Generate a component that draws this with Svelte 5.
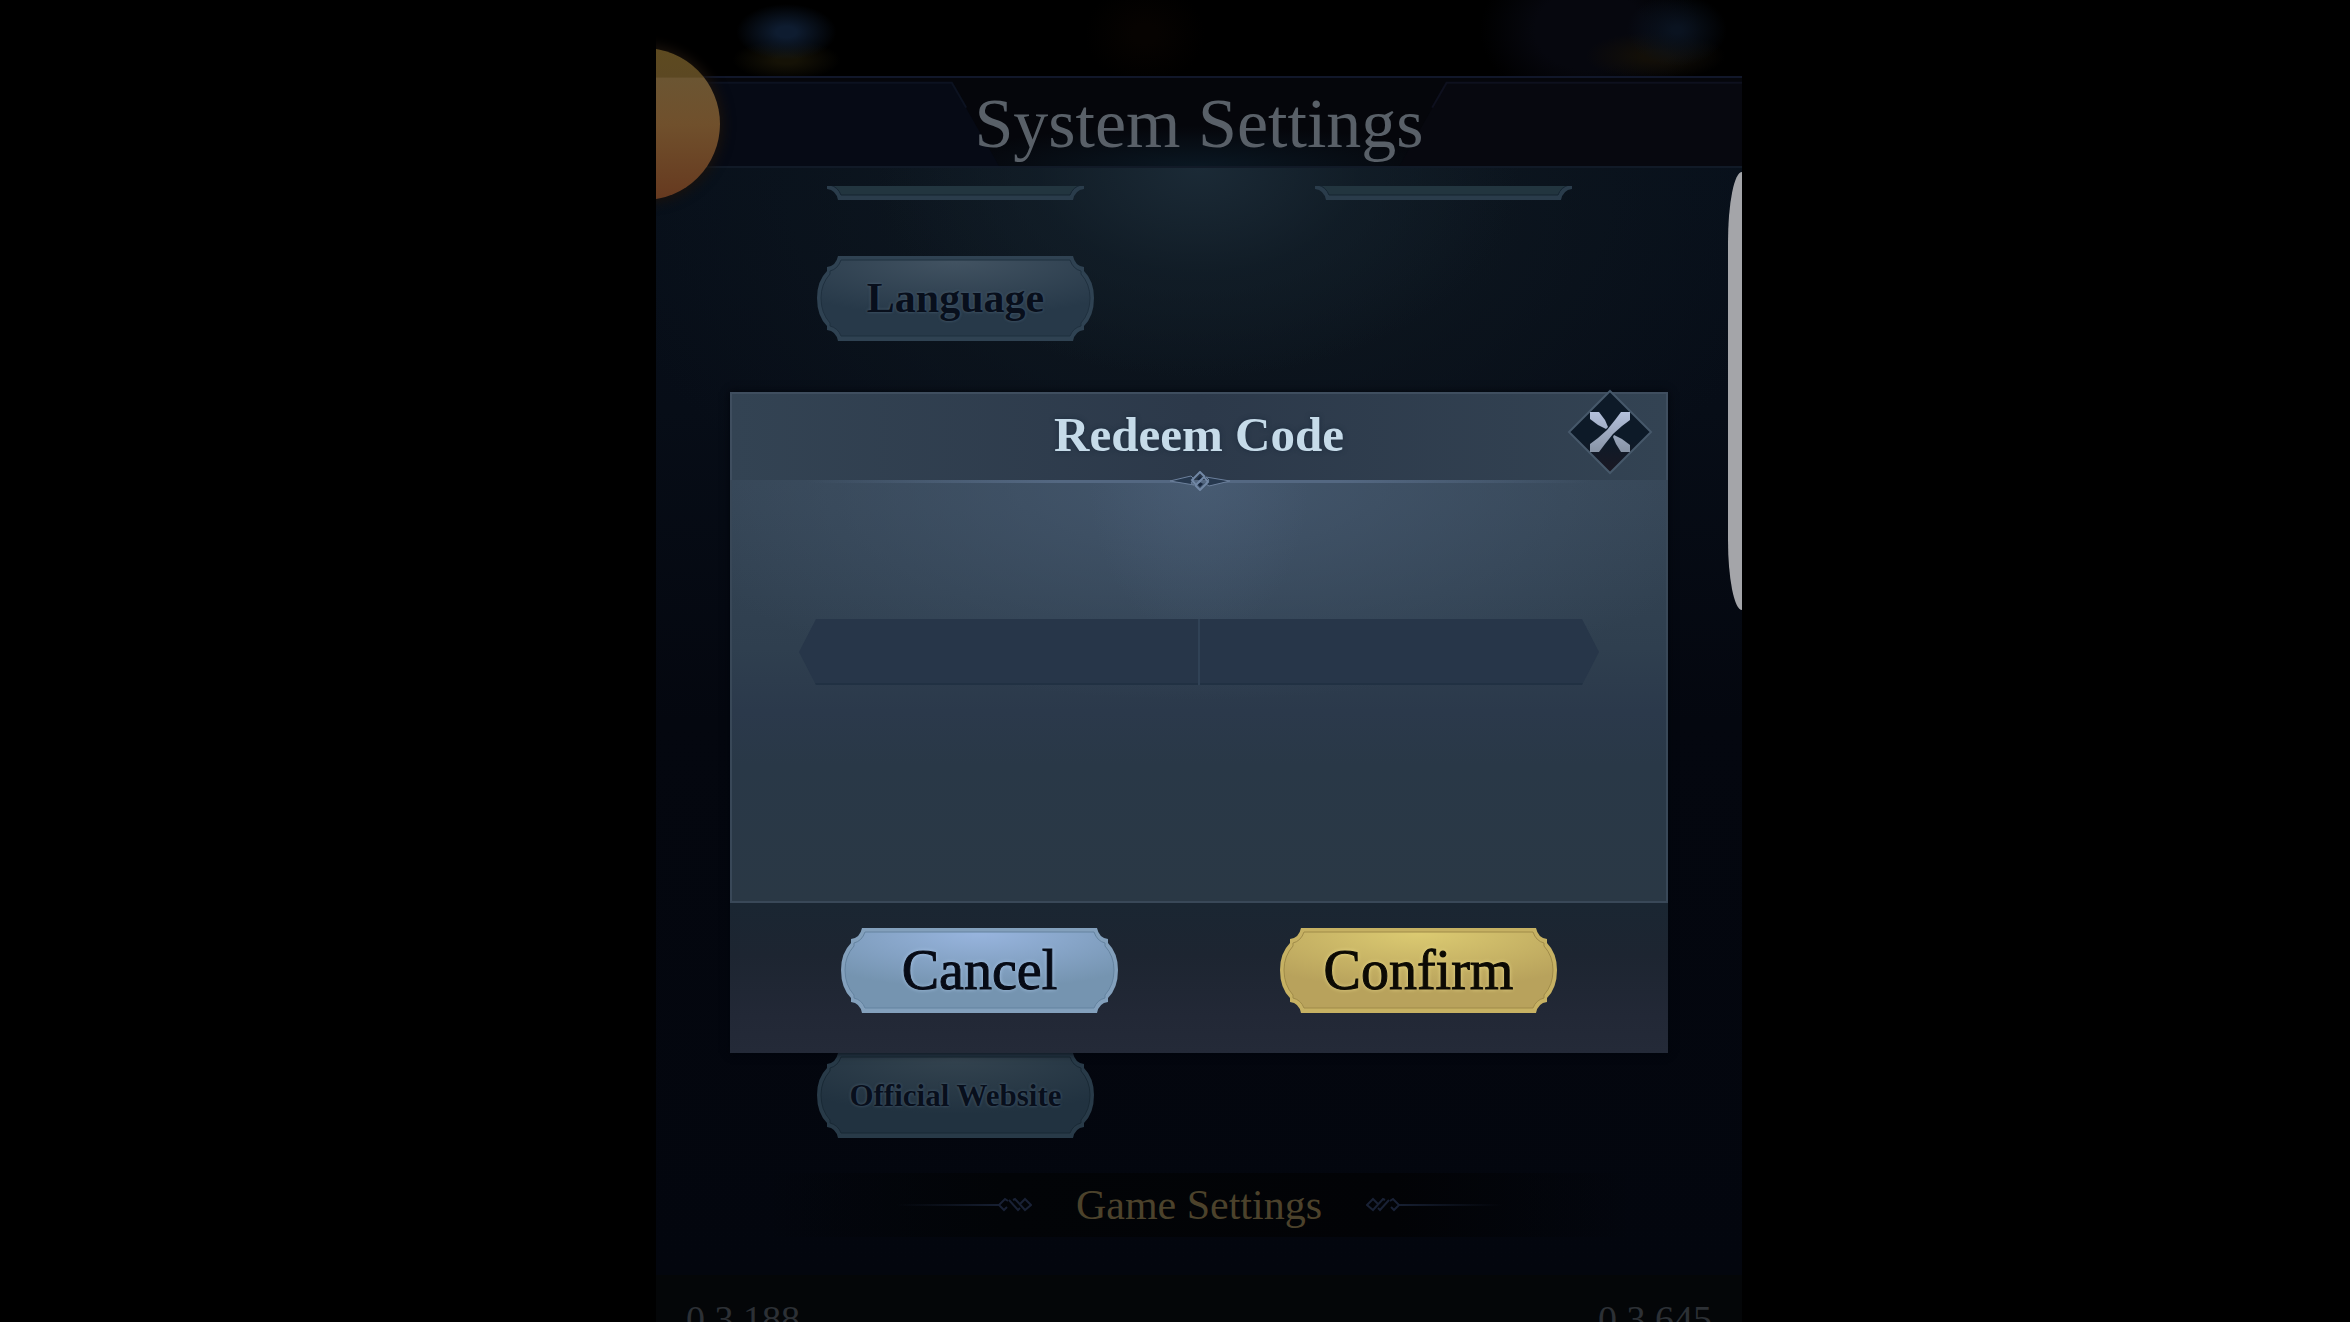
<script>
  let code = $state('');
  const plate =
    'M21 0H256Q258 10 267 11V15Q277 25 277 42Q277 60 267 70V74Q258 75 256 85H21Q19 75 10 74V70Q0 60 0 42Q0 25 10 15V11Q19 10 21 0Z';
  const rim =
    'M24 4H253Q256 13 264 15V18Q273 28 273 42Q273 57 264 67V70Q256 72 253 80H24Q21 72 13 70V67Q4 57 4 42Q4 28 13 18V15Q21 13 24 4Z';
</script>

{#snippet plateArt(id, light, base, edge, line)}
  <svg class="plate" viewBox="0 0 277 85" aria-hidden="true">
    <defs>
      <radialGradient id={id} cx="0.5" cy="0" r="0.75">
        <stop offset="0" stop-color={light} />
        <stop offset="1" stop-color={base} />
      </radialGradient>
    </defs>
    <path d={plate} fill={edge} />
    <path d={rim} fill="url(#{id})" stroke={line} stroke-width="1" />
  </svg>
{/snippet}

{#snippet flourish(flip)}
  <svg class="flourish" class:flip viewBox="0 0 136 16" aria-hidden="true">
    <defs>
      <linearGradient id="fade-{flip ? 'r' : 'l'}" x1="0" x2="1">
        <stop offset="0" stop-color="#141c2e" stop-opacity="0" />
        <stop offset="1" stop-color="#172033" />
      </linearGradient>
    </defs>
    <rect x="0" y="7" width="104" height="2" fill="url(#fade-{flip ? 'r' : 'l'})" />
    <g fill="none" stroke="#192135" stroke-width="2">
      <path d="M112 4L109 2L103 8L108 13L111 10" />
      <path d="M113 3L122 13L124 11" />
      <path d="M117 3L119 2L129 13L135 8L129 2L124 7" />
    </g>
  </svg>
{/snippet}

<div class="stage">
  <main class="phone">
    <div class="backdrop"></div>
    <header class="titlebar">
      <svg class="panel" viewBox="0 0 310 92" preserveAspectRatio="none" aria-hidden="true">
        <path d="M0 5H288L334 92H0Z" fill="#060a15" />
        <path d="M0 5H288L302 31" fill="none" stroke="#0c1220" stroke-width="2" />
      </svg>
      <h1>System Settings</h1>
      <svg class="panel" viewBox="0 0 310 92" preserveAspectRatio="none" aria-hidden="true">
        <path d="M310 5H22L-24 92H310Z" fill="#07080f" />
        <path d="M310 5H22L8 31" fill="none" stroke="#0e101e" stroke-width="2" />
      </svg>
    </header>

    <section class="settings">
      <div class="row">
        <span class="sliver">{@render plateArt('s1', '#25384a', '#22353f', '#2a3c4b', '#152431')}</span>
        <span class="sliver">{@render plateArt('s2', '#25384a', '#22353f', '#2a3c4b', '#152431')}</span>
      </div>
      <div class="row language">
        <button class="btn dim">
          {@render plateArt('b1', '#425362', '#273949', '#2f4252', '#1f303f')}
          <span>Language</span>
        </button>
      </div>
      <div class="row website">
        <button class="btn dim small">
          {@render plateArt('b2', '#344450', '#213240', '#283a48', '#192935')}
          <span>Official Website</span>
        </button>
      </div>
      <div class="section">
        {@render flourish(false)}
        <h2>Game Settings</h2>
        {@render flourish(true)}
      </div>
    </section>

    <footer class="versions">
      <span>0.3.188</span>
      <span>0.3.645</span>
    </footer>

    <div class="orb"></div>
    <div class="edge-handle"></div>

    <div class="overlay">
      <div class="dialog" role="dialog" aria-labelledby="dlg-title">
        <div class="head">
          <h2 id="dlg-title">Redeem Code</h2>
          <button class="close" aria-label="Close">
            <svg viewBox="-43 -43 86 86" aria-hidden="true">
              <defs>
                <linearGradient id="arm" x1="0" y1="-20" x2="0" y2="20" gradientUnits="userSpaceOnUse">
                  <stop offset="0" stop-color="#b4c1dc" />
                  <stop offset="1" stop-color="#8793a5" />
                </linearGradient>
                <linearGradient id="gem" x1="0" y1="0" x2="0" y2="1">
                  <stop offset="0.6" stop-color="#0d1a28" />
                  <stop offset="1" stop-color="#1b1823" />
                </linearGradient>
              </defs>
              <path d="M0 -41L41 0L0 41L-41 0Z" fill="url(#gem)" stroke="#46586a" stroke-width="2" />
              <g fill="url(#arm)">
                <path d="M-20 -20H-11L-5 -12L-2 -5L-4 -3L-12 -7L-20 -13Z" />
                <path d="M11 -20H20V-12L12 -6L3 2L-5 12L-11 20H-20V12L-12 6L-3 -2L5 -12Z" />
                <path d="M20 20H11L6 12L3 5L4 3L12 7L20 13Z" />
              </g>
            </svg>
          </button>
          <svg class="knot" viewBox="0 0 62 20" aria-hidden="true">
            <g fill="#26384e" stroke="#6c809c" stroke-width="1">
              <path d="M1 10L22 5L25 8L22 12L25 14Z" />
              <path d="M61 10L37 6L40 9L37 13L40 15Z" />
            </g>
            <path d="M31 5L34 8L31 11L34 13L31 16L28 13L31 10L28 8Z" fill="#182840" />
            <g fill="none" stroke="#7288a6" stroke-width="2">
              <path d="M36 6L31 1L23 9L27 14L32 9" />
              <path d="M26 14L31 19L39 11L35 6L30 11" />
            </g>
          </svg>
        </div>
        <div class="body">
          <div class="field">
            <input type="text" aria-label="Redeem code" bind:value={code} />
          </div>
        </div>
        <div class="actions">
          <button class="btn cancel">
            {@render plateArt('b3', '#98b5df', '#7594b0', '#83a0bc', '#6483a0')}
            <span>Cancel</span>
          </button>
          <button class="btn confirm">
            {@render plateArt('b4', '#dccb72', '#b8a25c', '#c6b163', '#a08b49')}
            <span>Confirm</span>
          </button>
        </div>
      </div>
    </div>
  </main>
</div>

<style>
  :global(body) {
    margin: 0;
    background: #000;
  }
  .stage {
    display: grid;
    grid-template-columns: 656fr 1086fr 608fr;
    height: 100vh;
    background: #000;
    font-family: 'Liberation Serif', 'Times New Roman', serif;
  }
  .phone {
    grid-column: 2;
    position: relative;
    display: flex;
    flex-direction: column;
    min-width: 0;
    overflow: hidden;
    background: #03060e;
  }
  h1,
  h2 {
    margin: 0;
    font-weight: 400;
    white-space: nowrap;
  }
  .backdrop {
    flex: none;
    height: 76px;
    background:
      radial-gradient(ellipse 50px 28px at 12% 32px, #0e1c30 20%, transparent 100%),
      radial-gradient(ellipse 54px 20px at 12% 60px, #151206 20%, transparent 100%),
      radial-gradient(ellipse 50px 36px at 94% 30px, #0a1320 10%, transparent 100%),
      radial-gradient(ellipse 70px 24px at 92% 56px, #130f08 20%, transparent 100%),
      radial-gradient(ellipse 110px 80px at 86% 30px, #06070e 50%, transparent 100%),
      radial-gradient(ellipse 60px 50px at 45% 34px, #060301 20%, transparent 100%),
      #000;
  }
  .titlebar {
    flex: none;
    display: flex;
    align-items: center;
    justify-content: space-between;
    box-sizing: border-box;
    height: 92px;
    border-top: 2px solid #11172a;
    border-bottom: 2px solid #111a27;
    background: radial-gradient(ellipse 260px 40px at 50% 100%, #0a1722, transparent), #05060b;
  }
  .panel {
    flex: 1;
    min-width: 0;
    height: 88px;
    overflow: visible;
  }
  h1 {
    position: relative;
    padding-top: 4px;
    color: #596068;
    font-size: 70px;
    line-height: 84px;
  }
  .settings {
    flex: none;
    padding-top: 18px;
    background:
      radial-gradient(ellipse 320px 210px at 50% 0, #1b2a36 0, #13202b99 50%, transparent 100%),
      radial-gradient(ellipse 620px 420px at 50% 0, #101a22, transparent 100%),
      linear-gradient(#070f1a 0, #070d17 22%, #04070f 50%, #03060e 100%);
  }
  .row {
    display: flex;
    justify-content: space-between;
    padding: 0 160px 0 161px;
  }
  .sliver {
    display: flex;
    align-items: flex-end;
    width: 277px;
    height: 14px;
    overflow: hidden;
  }
  .sliver > :global(*) {
    flex: none;
  }
  .plate {
    display: block;
    width: 277px;
    height: 85px;
  }
  .language {
    margin-top: 56px;
  }
  .website {
    margin-top: 712px;
  }
  .btn {
    display: grid;
    place-items: center;
    width: 277px;
    height: 85px;
    padding: 0;
    border: 0;
    background: none;
    font-family: inherit;
    font-size: 56px;
    cursor: pointer;
  }
  .btn > :global(*) {
    grid-area: 1 / 1;
  }
  .btn span {
    line-height: 85px;
    white-space: nowrap;
  }
  .dim {
    color: #080f1c;
    font-size: 42px;
    font-weight: 700;
    text-shadow: 0 0 3px #4d6275;
  }
  .small {
    font-size: 31px;
  }
  .cancel {
    color: #070b16;
    text-shadow: 0 0 4px #b5d2f2;
  }
  .confirm {
    color: #0c0a04;
    text-shadow: 0 0 4px #f2e494;
  }
  .cancel,
  .confirm {
    -webkit-text-stroke: 1px currentColor;
  }
  .section {
    display: flex;
    align-items: center;
    justify-content: center;
    gap: 44px;
    height: 64px;
    margin: 35px 0 38px;
    background: linear-gradient(90deg, transparent 10%, #020407 32%, #020306 68%, transparent 90%);
  }
  .section h2 {
    color: #4c422b;
    font-size: 42px;
    line-height: 64px;
  }
  .flourish {
    width: 136px;
    height: 16px;
  }
  .flip {
    transform: scaleX(-1);
  }
  .versions {
    flex: none;
    display: flex;
    justify-content: space-between;
    padding: 0 30px;
    background: #040608;
    color: #2c3035;
    font-size: 38px;
    line-height: 88px;
  }
  .orb {
    position: absolute;
    top: 48px;
    left: -88px;
    width: 152px;
    height: 152px;
    border-radius: 50%;
    background: linear-gradient(#5d4a20 0, #5c4822 19%, #6b5532 20%, #70502c 50%, #66391f 100%);
    box-shadow: 0 0 12px 3px #1a120c;
  }
  .edge-handle {
    position: absolute;
    top: 172px;
    right: 0;
    width: 14px;
    height: 438px;
    border-radius: 14px 0 0 14px / 70px 0 0 70px;
    background: #a4a5a9;
  }
  .overlay {
    position: absolute;
    top: 392px;
    left: 74px;
    right: 74px;
  }
  .dialog {
    box-shadow: 0 0 8px #02050b;
  }
  .head {
    position: relative;
    display: flex;
    align-items: flex-start;
    justify-content: center;
    box-sizing: border-box;
    height: 88px;
    border: solid #3f4e5f;
    border-width: 2px 2px 0;
    background: linear-gradient(90deg, #334353, #2c394a 50%, #334353);
  }
  .head h2 {
    color: #c6dbe9;
    font-size: 49px;
    font-weight: 700;
    line-height: 82px;
    text-shadow: 0 0 5px #1d2c3e;
  }
  .close {
    position: absolute;
    top: -5px;
    right: 13px;
    width: 86px;
    height: 86px;
    padding: 0;
    border: 0;
    background: none;
    cursor: pointer;
  }
  .close svg {
    display: block;
  }
  .knot {
    position: absolute;
    z-index: 1;
    bottom: -11px;
    left: calc(50% - 30px);
    width: 62px;
    height: 20px;
  }
  .body {
    display: flex;
    align-items: flex-start;
    box-sizing: border-box;
    height: 423px;
    padding: 139px 67px 0;
    border: solid #394858;
    border-width: 0 2px 2px;
    background:
      linear-gradient(90deg, transparent 8%, #546882 35%, #546882 65%, transparent 92%) top / 100% 3px no-repeat,
      radial-gradient(ellipse 110px 160px at 50% 0, #51668055, transparent),
      radial-gradient(ellipse 560px 220px at 50% 0, #43566c, transparent),
      linear-gradient(#354555, #2f3f4f 40%, #2b394b 55%, #293847 68%, #2a3845);
  }
  .field {
    flex: 1;
    display: flex;
    background:
      linear-gradient(#304256, #304256) center / 2px 100% no-repeat,
      linear-gradient(transparent 64px, #213143 64px),
      #273649;
    clip-path: polygon(17px 0, calc(100% - 17px) 0, 100% 50%, calc(100% - 17px) 100%, 17px 100%, 0 50%);
  }
  input {
    flex: 1;
    box-sizing: border-box;
    min-width: 0;
    height: 66px;
    padding: 0 32px;
    border: 0;
    outline: 0;
    background: none;
    color: #c6dbe9;
    font: 36px 'Liberation Serif', serif;
    text-align: center;
  }
  .actions {
    display: flex;
    justify-content: space-between;
    padding: 25px 111px 40px;
    background: linear-gradient(#1a2632, #1d2531 35%, #222836 75%, #242a38);
  }
</style>
